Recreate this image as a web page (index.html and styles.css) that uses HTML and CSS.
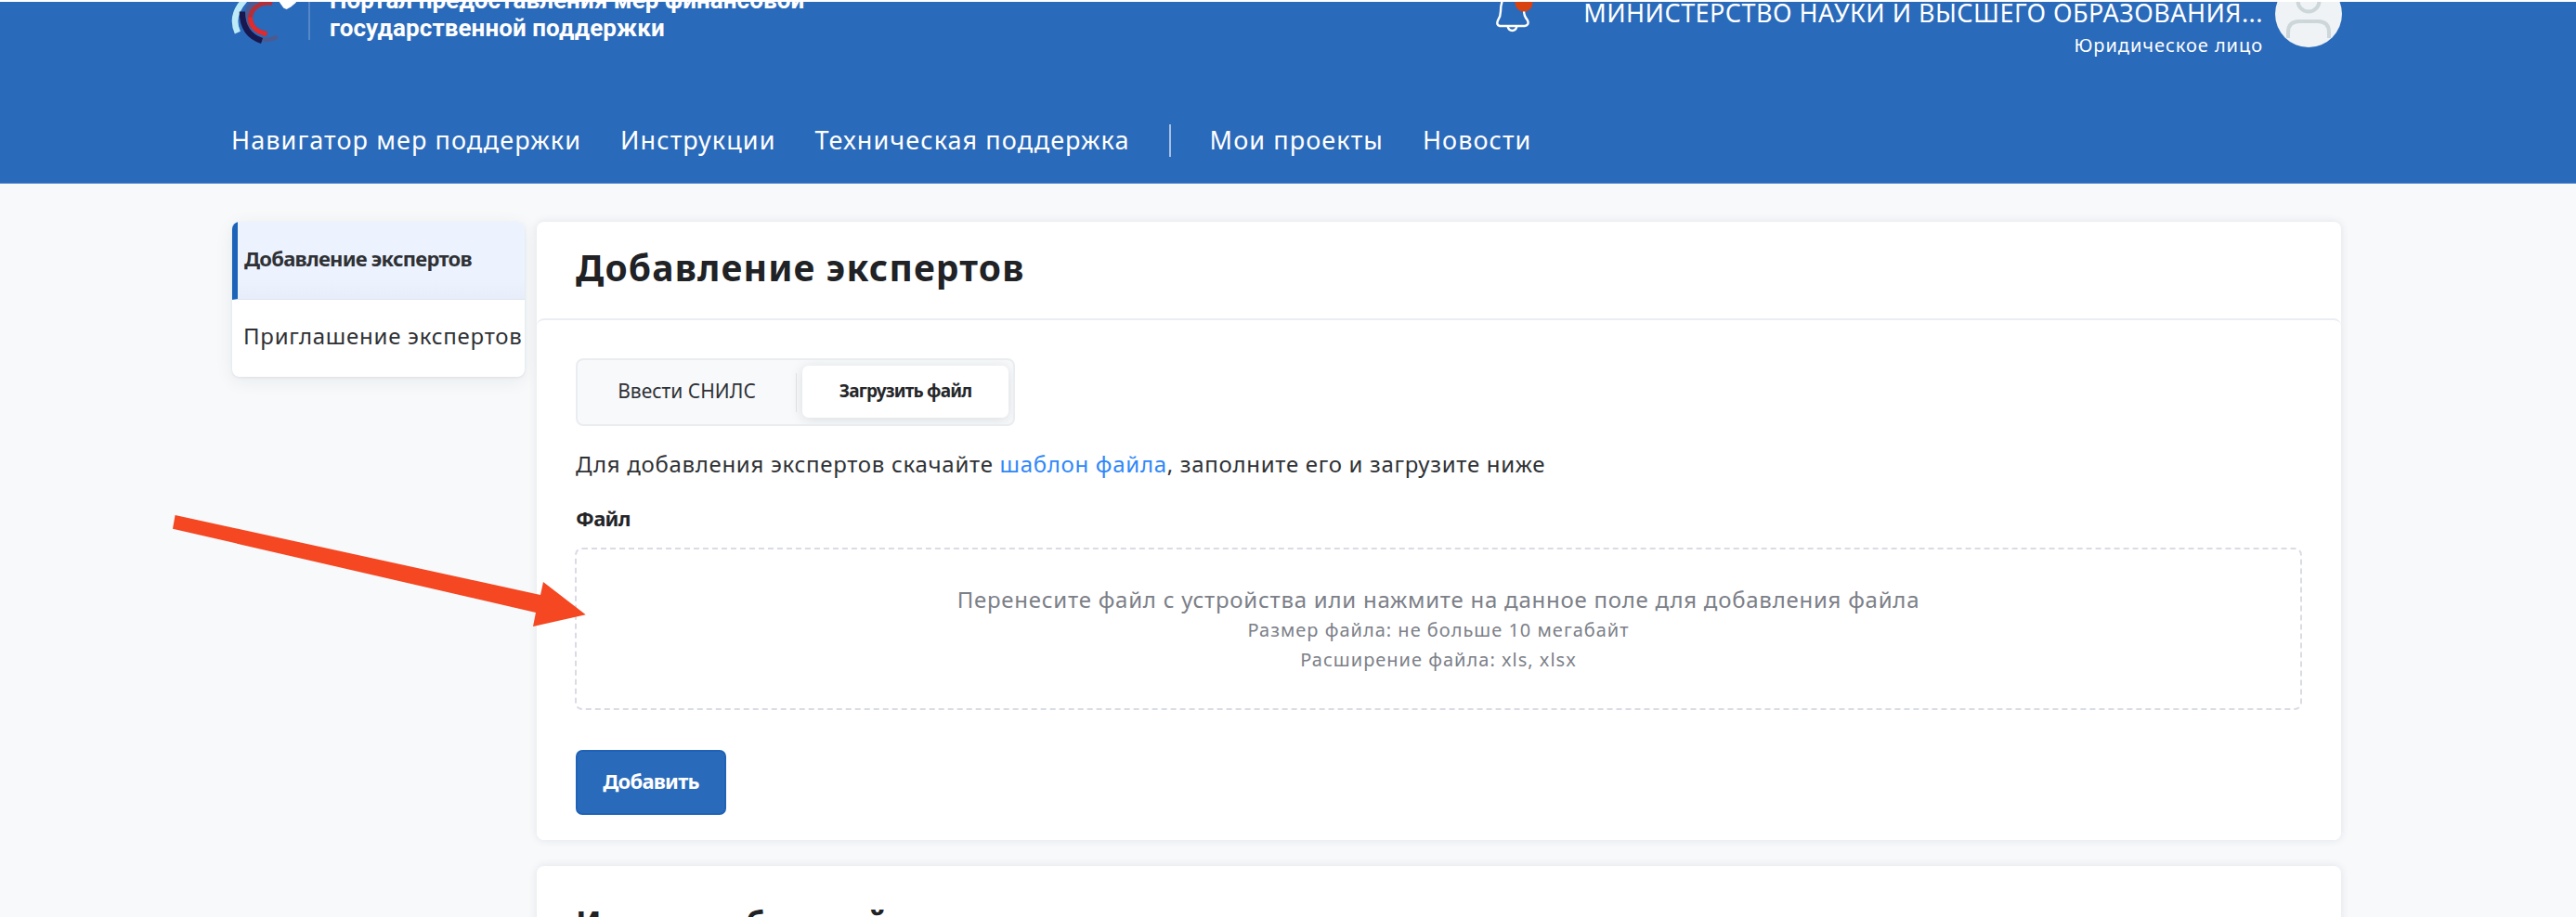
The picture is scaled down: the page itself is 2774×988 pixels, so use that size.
FILE: index.html
```
<!DOCTYPE html>
<html lang="ru">
<head>
<meta charset="utf-8">
<title>Добавление экспертов</title>
<link rel="stylesheet" href="styles.css">
</head>
<body>
<header class="header">
  <div class="header-top">
    <svg class="logo" viewBox="27 0 249 160" fill="none">
      <path d="M70 0 Q22 52 47 106" stroke="#bdeaf7" stroke-width="20"/>
      <path d="M104 2 Q62 40 90 92" stroke="#4b5b94" stroke-width="17"/>
      <path d="M122 127 Q152 134 176 119" stroke="#4d5a90" stroke-width="13"/>
      <path d="M62 38 Q62 112 126 133" stroke="#17184f" stroke-width="19"/>
      <path d="M160 10 C118 4 88 30 88 62 C90 88 112 106 142 110" stroke="#b52f38" stroke-width="15"/>
      <path d="M88 56 C90 88 112 106 142 110" stroke="#e12a2c" stroke-width="15"/>
      <path d="M178 0 L196 26 L206 30 L220 23 L237 8 V0 Z" fill="#fff"/>
    </svg>
    <div class="brand">Портал предоставления мер финансовой<br>государственной поддержки</div>
    <svg class="bell" viewBox="0 0 44 40" fill="none">
      <path d="M9 0 C7 4 6 8 6 14 C6 19 5 21 3 24 Q1 29 5 30 H32 Q37 29 35 24 C32 20 31 18 31 12" stroke="#fff" stroke-width="2.4"/>
      <path d="M13.500 30 Q14.500 35 18.500 35 Q22.500 35 23.500 30" stroke="#fff" stroke-width="2.400"/>
      <circle cx="31" cy="5" r="9.500" fill="#d8420f"/>
    </svg>
    <div class="account">
      <div class="account-name">МИНИСТЕРСТВО НАУКИ И ВЫСШЕГО ОБРАЗОВАНИЯ...</div>
      <div class="account-type">Юридическое лицо</div>
    </div>
    <svg class="avatar" viewBox="0 0 72 72" fill="none" stroke="#cdd6d9" stroke-width="4">
      <circle cx="36" cy="36" r="36" fill="#eff3f6" stroke="none"/>
      <circle cx="36" cy="22" r="11.500"/>
      <path d="M14 62 V56 Q14 44 26 44 H46 Q58 44 58 56 V62"/>
    </svg>
  </div>
  <nav class="nav">
    <a>Навигатор мер поддержки</a>
    <a>Инструкции</a>
    <a>Техническая поддержка</a>
    <span class="nav-divider"></span>
    <a>Мои проекты</a>
    <a>Новости</a>
  </nav>
</header>
<div class="page">
  <aside class="sidebar">
    <a class="side-item side-item-active">Добавление экспертов</a>
    <a class="side-item">Приглашение экспертов</a>
  </aside>
  <main class="content">
    <div class="panel">
      <h1 class="title">Добавление экспертов</h1>
      <section class="card">
        <div class="tabs">
          <span class="tab">Ввести СНИЛС</span>
          <span class="tab-divider"></span>
          <span class="tab tab-active">Загрузить файл</span>
        </div>
        <p class="hint">Для добавления экспертов скачайте <a class="link">шаблон файла</a>, заполните его и загрузите ниже</p>
        <div class="label">Файл</div>
        <div class="dropzone">
          <div class="drop-main">Перенесите файл с устройства или нажмите на данное поле для добавления файла</div>
          <div class="drop-note">Размер файла: не больше 10 мегабайт</div>
          <div class="drop-note">Расширение файла: xls, xlsx</div>
        </div>
        <button class="button">Добавить</button>
      </section>
    </div>
    <section class="card card-history">
      <h2 class="subtitle">История обучений</h2>
    </section>
  </main>
</div>
<svg class="arrow" viewBox="186 555 446 121"><path d="M188.600 555 L582 641 L585 627 L630.700 662.300 L574 675 L577 660 L186 569.700 Z" fill="#f44722"/></svg>
</body>
</html>
```
FILE: styles.css
```
* { box-sizing: border-box; }
html, body { margin: 0; }
body {
  width: 2774px;
  height: 988px;
  overflow: hidden;
  position: relative;
  padding-top: 2px;
  background: #fff;
  color: #2f3135;
  font-family: "Noto Sans", sans-serif;
}
.header {
  height: 196px;
  overflow: hidden;
  padding-left: 249px;
  background: #2a6aba;
  border-bottom: 1px solid #5f92d0;
  color: #fff;
  display: flex;
  flex-direction: column;
}
.header-top {
  display: flex;
  align-items: flex-start;
  flex: none;
  width: 2273px;
  height: 80px;
  margin-top: -22px;
}
.logo { width: 83px; height: 53px; margin-top: 20px; flex: none; }
.brand {
  margin-top: 5px;
  padding-left: 21px;
  border-left: 2px solid #5588c9;
  height: 58px;
  font: 700 26px/30px Roboto, sans-serif;
  letter-spacing: .08px;
  white-space: nowrap;
}
.bell { width: 44px; height: 40px; margin: 18px 0 0 auto; flex: none; }
.account {
  width: 783px;
  margin-top: 18px;
  text-align: right;
  white-space: nowrap;
}
.account-name { font-size: 27px; line-height: 32px; letter-spacing: .45px; }
.account-type { margin-top: 7px; font-size: 20px; line-height: 24px; letter-spacing: .95px; }
.avatar { width: 72px; height: 72px; margin: -1px 0 0 13px; flex: none; }
.nav {
  display: flex;
  align-items: center;
  gap: 42px;
  margin-top: 73px;
  font-size: 27px;
  line-height: 36px;
  letter-spacing: 1.08px;
  white-space: nowrap;
}
.nav-divider { width: 2px; height: 35px; background: #a9c1e0; }
.page {
  display: flex;
  align-items: flex-start;
  gap: 13px;
  height: 790px;
  padding: 41px 0 0 250px;
  background: #f7f9fb;
}
.sidebar {
  width: 315px;
  border-radius: 8px;
  overflow: hidden;
  background: #fff;
  box-shadow: 0 4px 20px rgba(30, 40, 40, .07), 0 1px 3px rgba(30, 40, 60, .08);
}
.side-item {
  display: flex;
  height: 83.500px;
  padding: 23px 0 0 12px;
  font-size: 24px;
  line-height: 32px;
  letter-spacing: .75px;
  white-space: nowrap;
}
.side-item-active {
  border-left: 6px solid #1c62b9;
  border-bottom: 1px solid #dde4f0;
  padding: 23px 0 0 7px;
  background: linear-gradient(#ecf3ff 75%, #e7eefa);
  font-size: 22px;
  font-weight: 700;
  letter-spacing: -.75px;
}
.content { width: 1943px; }
.panel, .card { border-radius: 8px; background: #fff; }
.panel { box-shadow: 0 0 10px rgba(30, 40, 50, .1); }
.title {
  margin: 0;
  height: 104px;
  padding: 23px 0 0 42px;
  color: #202225;
  font-size: 39px;
  line-height: 52px;
  letter-spacing: 1.15px;
}
.card { padding: 41px 42px 27px 42px; border-top: 2px solid #eaedf3; }
.tabs {
  display: flex;
  align-items: center;
  width: 473px;
  height: 73px;
  border: 2px solid #eaedf0;
  border-radius: 8px;
  background: #f7f9fb;
  overflow: hidden;
}
.tab { width: 235px; padding-bottom: 4px; text-align: center; font-size: 21px; line-height: 28px; white-space: nowrap; }
.tab-divider { width: 1px; height: 42px; background: #e3e6e9; }
.tab-active {
  width: 222px;
  height: 56px;
  margin: -1px 0 0 6px;
  padding: 0;
  border-radius: 7px;
  background: #fff;
  box-shadow: 0 2px 14px rgba(30, 40, 40, .13);
  color: #25272a;
  font-size: 19px;
  font-weight: 700;
  line-height: 55px;
  letter-spacing: -.8px;
}
.hint { margin: 24px 0 0; font-size: 24px; line-height: 34px; letter-spacing: .7px; white-space: nowrap; }
.link { color: #2f87fa; }
.label { margin: 25px 0 0; font-size: 22px; font-weight: 700; line-height: 32px; letter-spacing: -.7px; color: #222428; }
.dropzone {
  height: 175px;
  margin: 16px 0 0 -1px;
  padding-top: 38px;
  border: 2px dashed #d9dce4;
  border-radius: 8px;
  color: #7c8088;
  text-align: center;
}
.drop-main { height: 33px; font-size: 24px; line-height: 32px; letter-spacing: .75px; }
.drop-note { font-size: 20px; line-height: 32px; letter-spacing: 1px; }
.button {
  display: block;
  width: 162px;
  height: 70px;
  margin-top: 43px;
  padding: 0 0 5px;
  border: 2px solid #1f62b6;
  border-radius: 7px;
  background: #2a6aba;
  color: #fff;
  font: 700 22px/32px "Noto Sans", sans-serif;
  letter-spacing: -.75px;
}
.card-history {
  height: 100px;
  margin-top: 28px;
  padding-top: 38px;
  border-top: 0;
  box-shadow: 0 0 10px rgba(30, 40, 50, .1);
}
.subtitle { margin: 0; color: #202225; font-size: 35px; line-height: 48px; letter-spacing: 0; white-space: nowrap; }
.arrow { position: absolute; left: 186px; top: 555px; width: 446px; height: 121px; }
```
